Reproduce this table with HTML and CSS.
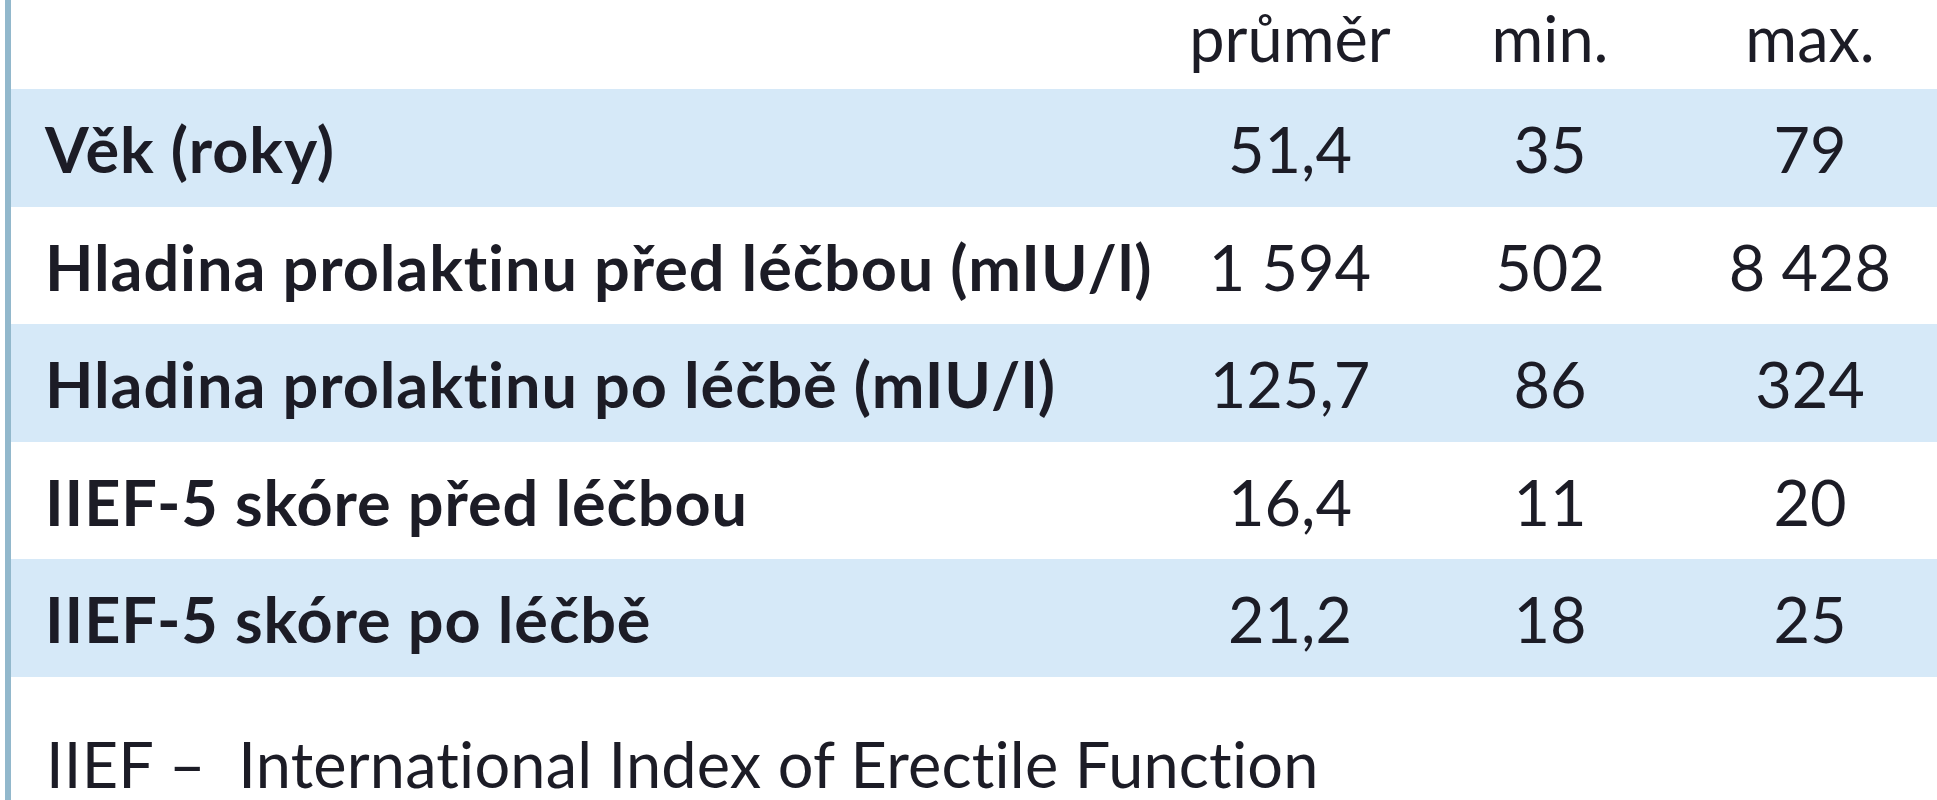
FILE: index.html
```html
<!DOCTYPE html>
<html lang="cs">
<head>
<meta charset="utf-8">
<title>Tabulka</title>
<link rel="stylesheet" href="styles.css">
</head>
<body>
<div class="frame">
  <table class="data">
    <colgroup>
      <col class="c-label">
      <col class="c-num">
      <col class="c-num">
      <col class="c-num">
    </colgroup>
    <thead>
      <tr class="head">
        <th></th>
        <th>průměr</th>
        <th>min.</th>
        <th>max.</th>
      </tr>
    </thead>
    <tbody>
      <tr class="band">
        <td class="label">Věk (roky)</td>
        <td>51,4</td>
        <td>35</td>
        <td>79</td>
      </tr>
      <tr>
        <td class="label">Hladina prolaktinu před léčbou (mIU/l)</td>
        <td>1 594</td>
        <td>502</td>
        <td>8 428</td>
      </tr>
      <tr class="band">
        <td class="label">Hladina prolaktinu po léčbě (mIU/l)</td>
        <td>125,7</td>
        <td>86</td>
        <td>324</td>
      </tr>
      <tr>
        <td class="label">IIEF-5 skóre před léčbou</td>
        <td>16,4</td>
        <td>11</td>
        <td>20</td>
      </tr>
      <tr class="band">
        <td class="label">IIEF-5 skóre po léčbě</td>
        <td>21,2</td>
        <td>18</td>
        <td>25</td>
      </tr>
    </tbody>
  </table>
  <p class="note">IIEF –&nbsp; International Index of Erectile Function</p>
</div>
</body>
</html>
```

FILE: styles.css
```css
html, body {
  margin: 0;
  padding: 0;
  background: #ffffff;
  overflow: hidden;
}

body {
  font-family: Lato, "Open Sans", "DejaVu Sans", sans-serif;
  font-size: 63px;
  color: #1c1c26;
}

.frame {
  margin-left: 5px;
  border-left: 6px solid #92b8cc;
  height: 800px;
  width: 1940px;
}

.data {
  border-collapse: collapse;
  border-spacing: 0;
  table-layout: fixed;
  width: 1929px;
}

.c-label { width: 1149px; }
.c-num { width: 260px; }

.data th,
.data td {
  padding: 0;
  text-align: center;
  white-space: nowrap;
}

.head th {
  font-weight: 400;
  height: 89px;
  line-height: 76px;
  vertical-align: top;
}

.data tbody td {
  height: 115.5px;
  line-height: 115.5px;
  padding-top: 2px;
  box-sizing: border-box;
  vertical-align: top;
}

.data td.label {
  text-align: left;
  padding-left: 34px;
  font-weight: 700;
  letter-spacing: 0.9px;
}

.band td {
  background: #d6e9f8;
}

.note {
  margin: 49px 0 0 0;
  padding-left: 35px;
  line-height: 76px;
  white-space: nowrap;
  letter-spacing: 0.2px;
}
```
